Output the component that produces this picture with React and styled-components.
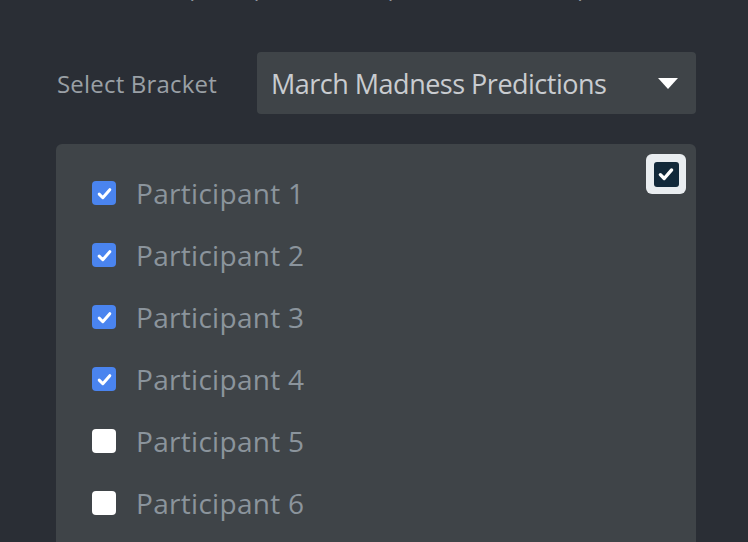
import React, { useState } from 'react';
import styled, { createGlobalStyle } from 'styled-components';

const GlobalStyle = createGlobalStyle`
  html, body {
    margin: 0;
    padding: 0;
    background: #2a2e35;
    overflow: hidden;
  }
  body {
    font-family: "Open Sans", "Noto Sans", sans-serif;
  }
`;

const Page = styled.div`
  width: 748px;
  height: 542px;
  overflow: hidden;
  background: #2a2e35;
  padding: 0 52px 0 56px;
  box-sizing: border-box;
`;

const Intro = styled.p`
  margin: -27px 0 0;
  height: 28px;
  text-align: center;
  font-size: 22px;
  line-height: 28px;
  color: #8f979e;
  white-space: nowrap;
`;

const BracketRow = styled.div`
  display: flex;
  align-items: center;
  margin-top: 51px;
`;

const Label = styled.label`
  width: 200px;
  font-size: 24px;
  letter-spacing: 0.2px;
  color: #9aa0a6;
  padding-left: 1px;
  white-space: nowrap;
`;

const SelectBox = styled.div`
  flex: 1;
  height: 62px;
  display: flex;
  align-items: center;
  justify-content: space-between;
  padding: 0 18px 0 14px;
  background: #3f4448;
  border-radius: 4px;
  font-family: "Open Sans", sans-serif;
  font-size: 27px;
  letter-spacing: -0.5px;
  color: #c9ccd0;
`;

const Caret = styled.span`
  width: 0;
  height: 0;
  border-left: 10px solid transparent;
  border-right: 10px solid transparent;
  border-top: 11px solid #ffffff;
`;

const Panel = styled.div`
  position: relative;
  margin-top: 30px;
  background: #3f4448;
  border-radius: 6px 6px 0 0;
  padding: 18px 0 0 36px;
  height: 420px;
`;

const ToggleAll = styled.button`
  position: absolute;
  top: 10px;
  right: 10px;
  width: 40px;
  height: 40px;
  padding: 0;
  border: none;
  border-radius: 6px;
  background: #e9edf0;
  display: flex;
  align-items: center;
  justify-content: center;
  cursor: pointer;
`;

const ToggleInner = styled.span`
  width: 25px;
  height: 25px;
  border-radius: 3px;
  background: #12293a;
  display: flex;
  align-items: center;
  justify-content: center;
`;

const List = styled.ul`
  list-style: none;
  margin: 0;
  padding: 0;
`;

const Row = styled.li`
  height: 62px;
  display: flex;
  align-items: center;
  gap: 20px;
  cursor: pointer;
`;

const Box = styled.span`
  width: 24px;
  height: 24px;
  border-radius: 4px;
  background: ${p => (p.$checked ? '#4a84ef' : '#ffffff')};
  display: flex;
  align-items: center;
  justify-content: center;
  flex-shrink: 0;
`;

const Name = styled.span`
  font-family: "Open Sans", sans-serif;
  font-size: 28px;
  color: #8b949c;
  letter-spacing: 0.3px;
`;

const Check = ({ size = 17, width = 2.8 }) => (
  <svg width={size} height={size} viewBox="0 0 16 16" fill="none">
    <path d="M3 8.6 L6.4 12 L13 4.4" stroke="#ffffff" strokeWidth={width} strokeLinecap="round" strokeLinejoin="round" />
  </svg>
);

const initial = [true, true, true, true, false, false, false];

const App = () => {
  const [checked, setChecked] = useState(initial);

  const toggle = (i) => {
    setChecked(checked.map((c, j) => (j === i ? !c : c)));
  };

  return (
    <Page>
      <GlobalStyle />
      <Intro>Select participants to compare their bracket picks</Intro>
      <BracketRow>
        <Label>Select Bracket</Label>
        <SelectBox>
          <span>March Madness Predictions</span>
          <Caret />
        </SelectBox>
      </BracketRow>
      <Panel>
        <ToggleAll onClick={() => setChecked(checked.map(() => true))}>
          <ToggleInner>
            <Check size={18} width={3} />
          </ToggleInner>
        </ToggleAll>
        <List>
          {checked.map((c, i) => (
            <Row key={i} onClick={() => toggle(i)}>
              <Box $checked={c}>{c && <Check />}</Box>
              <Name>Participant {i + 1}</Name>
            </Row>
          ))}
        </List>
      </Panel>
    </Page>
  );
};

export default App;
